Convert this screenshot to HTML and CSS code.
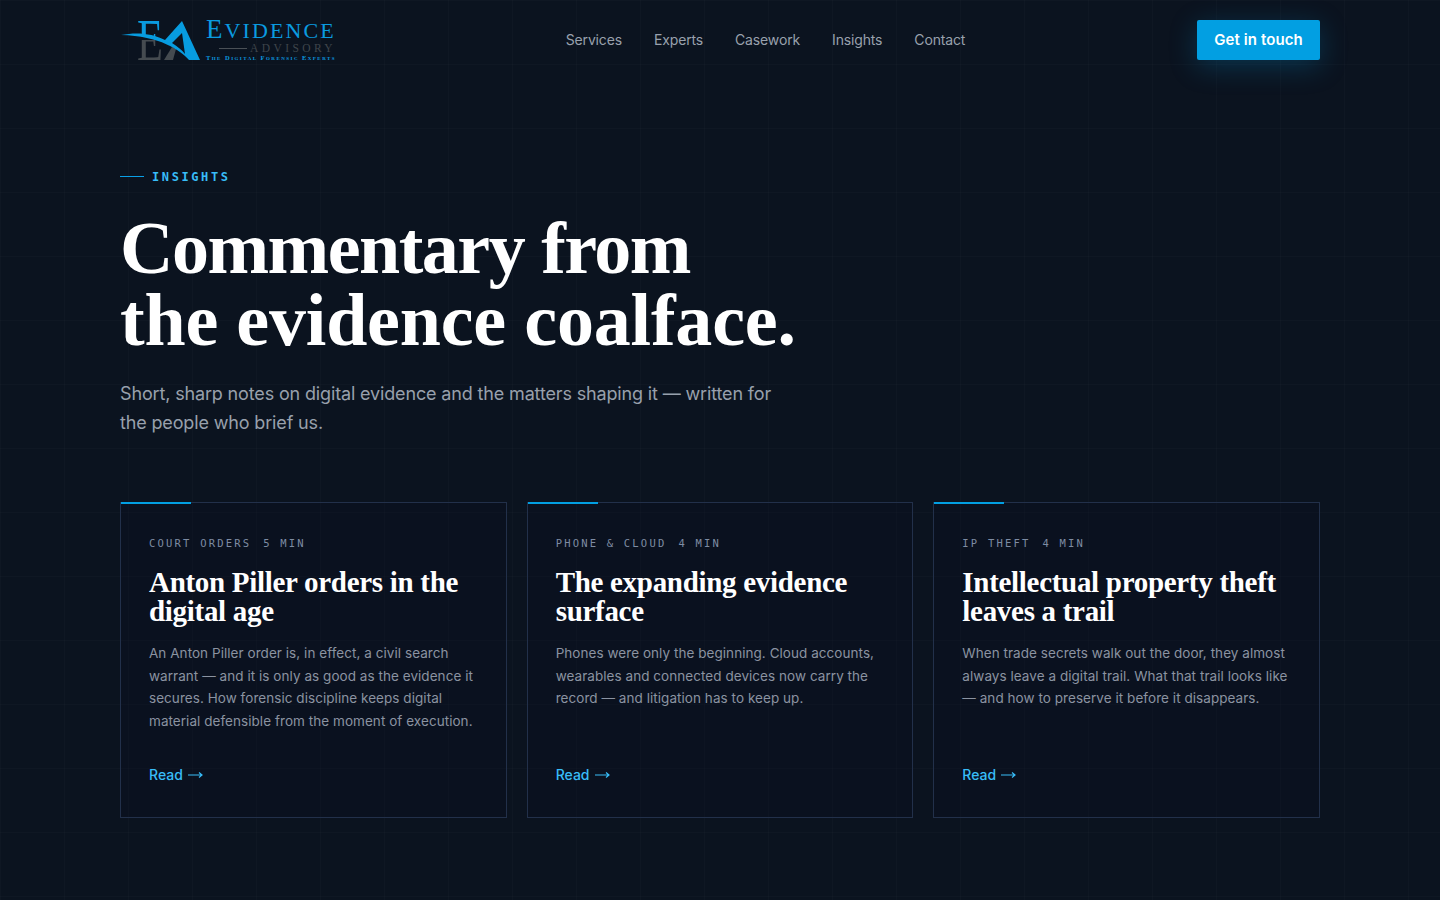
FILE: index.html
```html
<!DOCTYPE html>
<html lang="en">
<head>
<meta charset="utf-8">
<title>Insights</title>
<link rel="stylesheet" href="styles.css">
</head>
<body>
<header class="topbar">
  <a class="logo" href="#">
    <svg class="logo-mark" width="84" height="44" viewBox="0 0 84 44">
      <defs>
        <clipPath id="clip-top"><rect x="0" y="0" width="84" height="19"/></clipPath>
        <clipPath id="clip-bottom"><rect x="0" y="22" width="84" height="22"/></clipPath>
      </defs>
      <g clip-path="url(#clip-bottom)"><text class="mark-letter mark-gray" transform="translate(17 42) scale(.72 1)">E</text></g>
      <g clip-path="url(#clip-top)"><text class="mark-letter mark-blue" transform="translate(17 42) scale(.72 1)">E</text></g>
      <path class="mark-gray-fill" d="M44 42 L52 29 L56 31 L53 42Z"/>
      <path class="mark-blue-fill" fill-rule="evenodd" d="M1 17 C16 14 32 15 45 22 L62 3 L80 42 L69 42 C60 32 40 18 1 17Z M52 25 C57 28 62 32 65 36 L62 15Z"/>
    </svg>
    <span class="logo-text">
      <span class="logo-name">E<span class="logo-small">VIDENCE</span></span>
      <span class="logo-sub"><i class="logo-rule"></i>ADVISORY</span>
      <span class="logo-tag">The Digital Forensic Experts</span>
    </span>
  </a>
  <nav class="nav">
    <a href="#">Services</a>
    <a href="#">Experts</a>
    <a href="#">Casework</a>
    <a href="#">Insights</a>
    <a href="#">Contact</a>
  </nav>
  <a class="cta" href="#">Get in touch</a>
</header>
<main class="page">
  <section class="hero">
    <p class="eyebrow"><i class="eyebrow-rule"></i>INSIGHTS</p>
    <h1><span class="h1-first">Commentary from</span><br>the evidence coalface.</h1>
    <p class="lede">Short, sharp notes on digital evidence and the matters shaping it — written for the people who brief us.</p>
  </section>
  <section class="cards">
    <article class="card">
      <p class="meta"><span>COURT ORDERS</span><span>5 MIN</span></p>
      <h2>Anton Piller orders in the digital age</h2>
      <p class="excerpt">An Anton Piller order is, in effect, a civil search warrant — and it is only as good as the evidence it secures. How forensic discipline keeps digital material defensible from the moment of execution.</p>
      <a class="read" href="#">Read <svg class="arrow" width="15" height="8" viewBox="0 0 15 8"><path d="M0 4H14M11 1.5L14 4L11 6.5"/></svg></a>
    </article>
    <article class="card">
      <p class="meta"><span>PHONE &amp; CLOUD</span><span>4 MIN</span></p>
      <h2>The expanding evidence surface</h2>
      <p class="excerpt">Phones were only the beginning. Cloud accounts, wearables and connected devices now carry the record — and litigation has to keep up.</p>
      <a class="read" href="#">Read <svg class="arrow" width="15" height="8" viewBox="0 0 15 8"><path d="M0 4H14M11 1.5L14 4L11 6.5"/></svg></a>
    </article>
    <article class="card">
      <p class="meta"><span>IP THEFT</span><span>4 MIN</span></p>
      <h2>Intellectual property theft leaves a trail</h2>
      <p class="excerpt">When trade secrets walk out the door, they almost always leave a digital trail. What that trail looks like — and how to preserve it before it disappears.</p>
      <a class="read" href="#">Read <svg class="arrow" width="15" height="8" viewBox="0 0 15 8"><path d="M0 4H14M11 1.5L14 4L11 6.5"/></svg></a>
    </article>
  </section>
</main>
</body>
</html>
```
FILE: styles.css
```css
* { box-sizing: border-box; }
html, body { margin: 0; height: 100%; }
body {
  background-color: #0b131f;
  background-image:
    linear-gradient(rgba(255, 255, 255, .016) 1px, transparent 1px),
    linear-gradient(90deg, rgba(255, 255, 255, .016) 1px, transparent 1px);
  background-size: 64px 64px;
  color: #fff;
  font-family: Inter, "Open Sans", sans-serif;
  overflow: hidden;
}
a { text-decoration: none; color: inherit; }
p, h1, h2 { margin: 0; }
.topbar {
  height: 80px;
  padding: 0 120px;
  display: flex;
  align-items: center;
  justify-content: space-between;
}
.logo { display: flex; width: 214px; align-items: center; }
.logo-mark { flex: none; }
.mark-letter { font: 400 59px "Liberation Serif", serif; }
.mark-blue { fill: #0a9be0; }
.mark-gray { fill: #454b50; }
.mark-blue-fill { fill: #079ce0; }
.mark-gray-fill { fill: #454b50; }
.logo-text { display: flex; flex-direction: column; flex: none; margin-left: 2px; font-family: "Liberation Serif", serif; color: #0a9be0; }
.logo-name { font-size: 27px; line-height: 22px; letter-spacing: 2.1px; white-space: nowrap; }
.logo-small { font-size: 22px; }
.logo-sub { display: flex; align-items: center; justify-content: flex-end; color: #3f454b; font-size: 11.5px; line-height: 11px; letter-spacing: 3.4px; margin-top: 1px; }
.logo-rule { width: 28px; height: 1px; background: #4a5056; margin-right: 3px; }
.logo-tag { font-size: 6.5px; line-height: 8px; font-weight: 700; letter-spacing: 1.45px; font-variant: small-caps; white-space: nowrap; }
.nav { display: flex; gap: 32px; font-size: 14px; color: #99a1ad; letter-spacing: -.15px; padding-bottom: 2px; }
.cta {
  width: 123px; height: 40px;
  display: flex; align-items: center; justify-content: center;
  background: #029fe2;
  border-radius: 2px;
  color: #fff;
  font: 600 15px Inter, sans-serif;
  letter-spacing: .1px;
  padding-bottom: 2px;
  box-shadow: 0 6px 28px rgba(2, 159, 226, .25);
}
.page { padding: 0 120px; }
.hero { padding-top: 90px; }
.eyebrow {
  display: flex; align-items: center; gap: 8px;
  font: 700 12px/15px "DejaVu Sans Mono", monospace;
  letter-spacing: 2.6px;
  color: #38bdf8;
}
.eyebrow-rule { width: 24px; height: 1px; background: #0a9fe6; flex: none; margin-top: -2px; }
h1 {
  margin-top: 27px;
  font: 700 74px/72px "Liberation Serif", serif;
  letter-spacing: -.2px;
}
.h1-first { letter-spacing: -1.5px; }
.lede {
  margin-top: 23px;
  width: 660px;
  font-size: 18px;
  line-height: 29px;
  letter-spacing: -.15px;
  color: #98a0ac;
}
.cards {
  margin-top: 65px;
  display: grid;
  grid-template-columns: repeat(3, 1fr);
  gap: 20px;
}
.card {
  position: relative;
  height: 316px;
  padding: 33px 28px 0;
  border: 1px solid #22304a;
  background: rgba(6, 12, 30, .25);
  display: flex;
  flex-direction: column;
}
.card::before {
  content: "";
  position: absolute;
  top: -1px; left: 0;
  width: 70px; height: 2px;
  background: #029fe2;
}
.meta {
  display: flex; gap: 12px;
  font: 400 10.5px/14px "DejaVu Sans Mono", monospace;
  letter-spacing: 2.2px;
  color: #7e8ca3;
}
h2 {
  margin-top: 18px;
  font: 700 29px/29px "Liberation Serif", serif;
  letter-spacing: -.3px;
}
.excerpt {
  margin-top: 16px;
  font-size: 13.5px;
  line-height: 22.5px;
  letter-spacing: .05px;
  color: #8b93a1;
}
.read {
  position: absolute;
  left: 28px; top: 262px;
  display: flex; align-items: center; gap: 5px;
  font: 500 14px/20px Inter, sans-serif;
  color: #38bdf8;
}
.arrow { fill: none; stroke: currentColor; stroke-width: 1.2; }
```
